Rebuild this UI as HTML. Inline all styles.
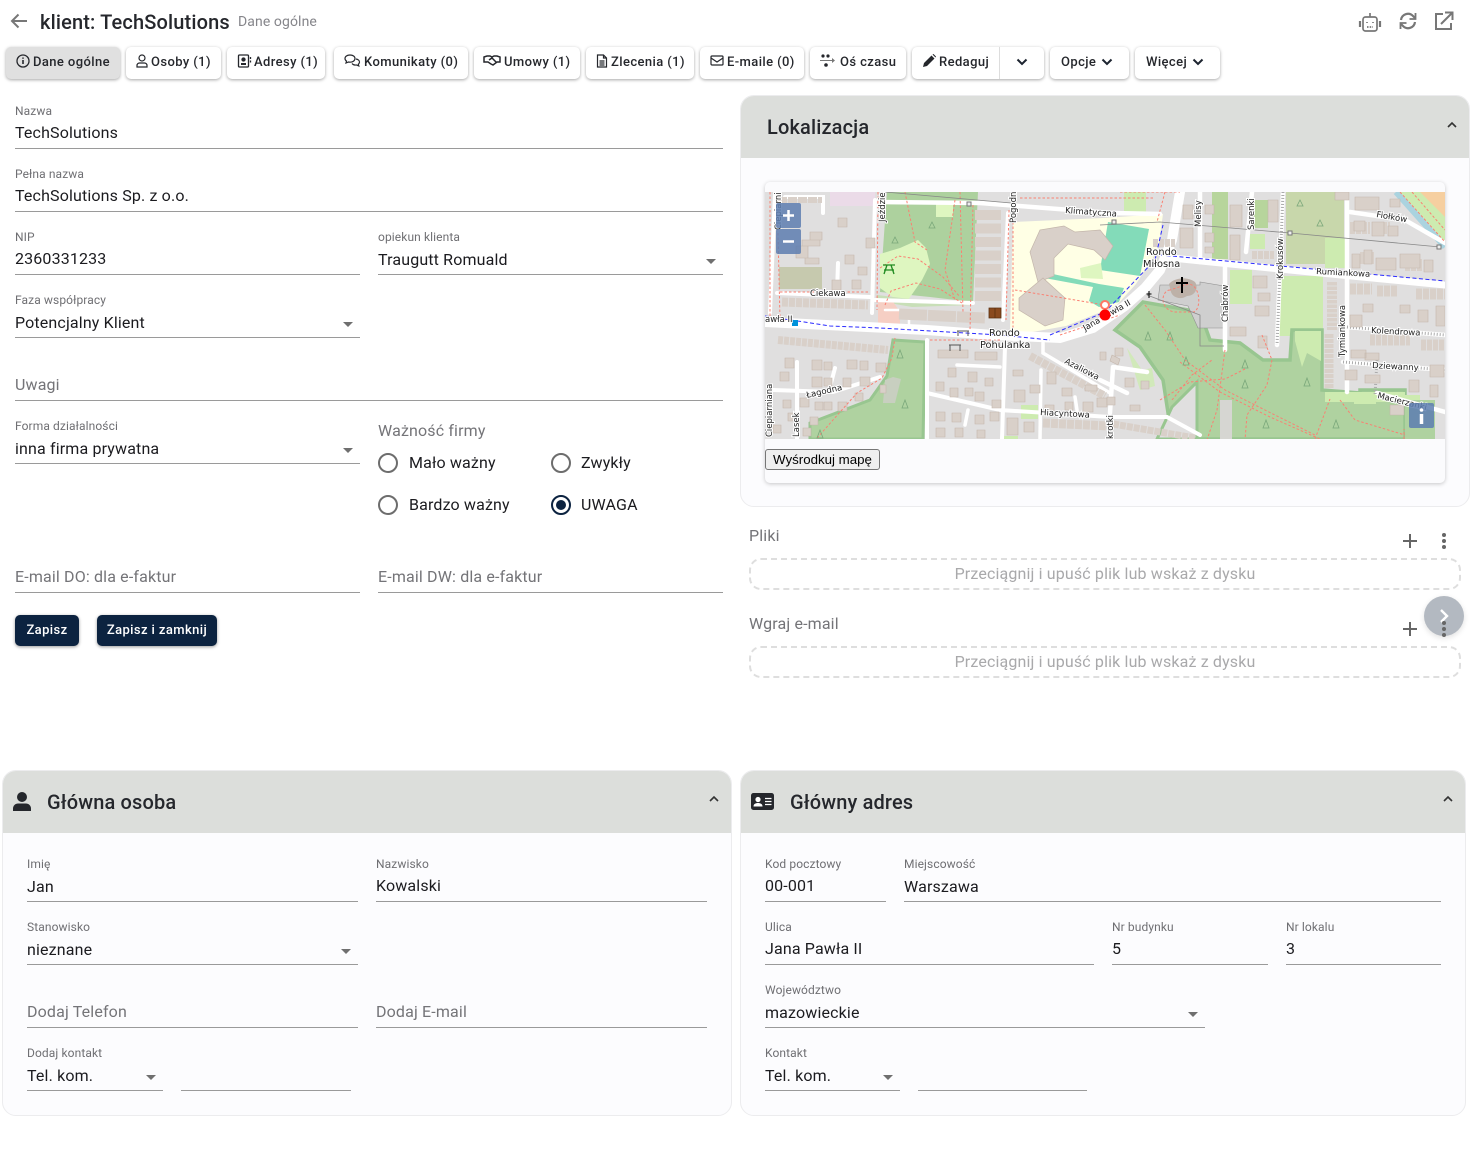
<!DOCTYPE html>
<html lang="pl"><head><meta charset="utf-8"><title>klient: TechSolutions</title>
<style>
html,body{margin:0;padding:0;background:#fff}
body{width:1473px;height:1173px;position:relative;overflow:hidden;font-family:"Roboto","Liberation Sans",Arial,sans-serif;color:#1b1b1f}
.t,.l,.v,.p{position:absolute;white-space:nowrap;line-height:20px}
.l{font-size:12px;color:#6f6f73;letter-spacing:.1px}
.v{font-size:16px;color:#1b1b1f;letter-spacing:.15px;margin-top:1px}
.p{font-size:16px;color:#747478;letter-spacing:.15px;margin-top:1px}
.u{position:absolute;height:1px;background:#9a9a9a}
.a{position:absolute;width:0;height:0;border-left:5px solid transparent;border-right:5px solid transparent;border-top:5px solid #6f6f6f}
.tab{position:absolute;top:47px;height:32px;background:#fff;border-radius:5px;box-shadow:0 1px 3px rgba(0,0,0,.35);font-size:13px;font-weight:500;line-height:30px;color:#25272c;white-space:nowrap;letter-spacing:.4px}
.tab svg{position:absolute;top:6px}
.tab span{position:absolute;top:1px}
.panel{position:absolute;border:1px solid #ececee;border-radius:14px;background:#fcfcfe;overflow:hidden}
.hd{position:absolute;left:0;right:0;top:0;height:62px;background:#dcdedb}
.ttl{position:absolute;font-size:20px;font-weight:500;line-height:24px;color:#25272c;white-space:nowrap;letter-spacing:.15px}
.r{position:absolute;width:16px;height:16px;border:2px solid #6d6d6d;border-radius:50%}
.btn{position:absolute;top:615px;height:31px;background:#0c2340;border-radius:5px;color:#fff;font-size:13px;font-weight:500;line-height:32px;text-align:center;box-shadow:0 1px 3px rgba(0,0,0,.4);letter-spacing:.4px}
.dz{position:absolute;left:749px;width:708px;height:28px;border:2px dashed #dedede;border-radius:12px;text-align:center;font-size:16px;line-height:27px;color:#a9a9ab;letter-spacing:.15px}
.ic{position:absolute}
</style></head><body>

<svg class="ic" style="left:9px;top:11px" width="20" height="20" viewBox="0 0 20 20"><path d="M18 10H3M9.500 3.500L3 10l6.500 6.500" fill="none" stroke="#777" stroke-width="2"/></svg>
<div class="ttl" style="left:40px;top:10px">klient: TechSolutions</div>
<div class="t" style="left:238px;top:12px;font-size:14px;color:#85858a;letter-spacing:.1px">Dane ogólne</div>

<svg class="ic" style="left:1358px;top:11px" width="24" height="22" viewBox="0 0 24 22" fill="none" stroke="#777" stroke-width="1.700"><rect x="5" y="6" width="14" height="14" rx="2.500"/><path d="M12 6V2"/><path d="M2 10v6M22 10v6" stroke-width="2.200"/><path d="M9 11v1M15 11v1M9 16h6" stroke-dasharray="1.500 1.200"/></svg>
<svg class="ic" style="left:1398px;top:11px" width="20" height="20" viewBox="0 0 20 20" fill="none" stroke="#777" stroke-width="2.200"><path d="M3 9a7 7 0 0 1 12-4l2 2M17 11a7 7 0 0 1-12 4l-2-2"/><path d="M17.500 2v6h-6M2.500 18v-6h6" fill="none" stroke-width="1.800"/></svg>
<svg class="ic" style="left:1434px;top:11px" width="20" height="20" viewBox="0 0 20 20" fill="none" stroke="#777" stroke-width="2"><path d="M9 3H2v15h15v-6M7 13L18 2M11 1.500h7.500V9"/></svg>

<div class="tab" style="left:6px;width:114px;background:#e0e0e0"><svg style="left:9px" width="16" height="16" viewBox="0 0 16 16" fill="none" stroke="#25272c" stroke-width="1.300"><circle cx="8" cy="8" r="6"/><path d="M8 7v4M8 4.500v1.200" stroke-width="1.600"/></svg><span style="left:27px">Dane ogólne</span></div>
<div class="tab" style="left:126px;width:95px"><svg style="left:8px" width="16" height="16" viewBox="0 0 16 16" fill="none" stroke="#25272c" stroke-width="1.200"><circle cx="8" cy="5" r="3"/><path d="M3 14v-1.500a2.500 2.500 0 0 1 2.500-2.500h5a2.500 2.500 0 0 1 2.500 2.500V14z"/></svg><span style="left:25px">Osoby (1)</span></div>
<div class="tab" style="left:227px;width:98px"><svg style="left:9px" width="16" height="16" viewBox="0 0 16 16" fill="none" stroke="#25272c" stroke-width="1.300"><rect x="2.500" y="2" width="10" height="12" rx="1"/><circle cx="7.500" cy="6.500" r="1.500" fill="#25272c"/><path d="M5 11h5" stroke-width="2"/><path d="M14.500 4v2M14.500 7.500v2"/></svg><span style="left:27px">Adresy (1)</span></div>
<div class="tab" style="left:334px;width:134px"><svg style="left:9px" width="18" height="16" viewBox="0 0 18 16" fill="none" stroke="#25272c" stroke-width="1.200"><path d="M7 2C4 2 2 3.500 2 5.500c0 1 .5 2 1.500 2.600L3 10l2.500-1c.5.100 1 .2 1.500.2 3 0 5-1.700 5-3.700S10 2 7 2z"/><path d="M13 6c2 .3 3.500 1.500 3.500 3 0 1-.5 1.700-1.200 2.200l.5 1.800-2.300-1c-2 .3-3.500-.2-4.500-1.500"/></svg><span style="left:30px">Komunikaty (0)</span></div>
<div class="tab" style="left:474px;width:106px"><svg style="left:9px" width="18" height="16" viewBox="0 0 18 16" fill="none" stroke="#25272c" stroke-width="1.500"><path d="M1 4l3-1 3 0 2 1 2-1h3l3 1v5l-3 0-4 3-2-1-3-2H1z"/><path d="M6 7l3-2 4 4"/></svg><span style="left:30px">Umowy (1)</span></div>
<div class="tab" style="left:586px;width:108px"><svg style="left:8px" width="16" height="16" viewBox="0 0 16 16" fill="none" stroke="#25272c" stroke-width="1.200"><path d="M3.500 2h6l3 3v9h-9zM9.500 2v3h3M5.500 8h5M5.500 10h5M5.500 12h5"/></svg><span style="left:25px">Zlecenia (1)</span></div>
<div class="tab" style="left:700px;width:104px"><svg style="left:9px" width="16" height="16" viewBox="0 0 16 16" fill="none" stroke="#25272c" stroke-width="1.200"><rect x="2" y="3" width="12" height="9" rx="1"/><path d="M2 5l6 4 6-4"/></svg><span style="left:27px">E-maile (0)</span></div>
<div class="tab" style="left:810px;width:96px"><svg style="left:9px" width="18" height="16" viewBox="0 0 18 16" fill="#25272c"><circle cx="4" cy="3" r="1.600"/><circle cx="9" cy="3" r="1.600"/><circle cx="7" cy="12" r="1.800"/><path d="M1 7h12V5l3 2.500-3 2.500V8H1z" fill="#777"/></svg><span style="left:30px">Oś czasu</span></div>
<div class="tab" style="left:912px;width:132px"><svg style="left:9px" width="16" height="16" viewBox="0 0 16 16" fill="#25272c"><path d="M2 14l1-4 7.500-7.500 3 3L6 13zM11.500 1.500l1-.5 2.500 2.500-.5 1z"/></svg><span style="left:27px">Redaguj</span><div style="position:absolute;left:87px;top:0;width:1px;height:32px;background:#ddd"></div><svg style="left:104px;top:9px" width="12" height="12" viewBox="0 0 12 12" fill="none" stroke="#1d2430" stroke-width="2"><path d="M1.500 3.500L6 8l4.500-4.500"/></svg></div>
<div class="tab" style="left:1050px;width:79px"><span style="left:11px">Opcje</span><svg style="left:51px;top:9px" width="12" height="12" viewBox="0 0 12 12" fill="none" stroke="#1d2430" stroke-width="2"><path d="M1.500 3.500L6 8l4.500-4.500"/></svg></div>
<div class="tab" style="left:1135px;width:85px"><span style="left:11px">Więcej</span><svg style="left:57px;top:9px" width="12" height="12" viewBox="0 0 12 12" fill="none" stroke="#1d2430" stroke-width="2"><path d="M1.500 3.500L6 8l4.500-4.500"/></svg></div>

<!-- left form -->
<div class="l" style="left:15px;top:101px">Nazwa</div><div class="v" style="left:15px;top:122px">TechSolutions</div><div class="u" style="left:15px;top:148px;width:708px"></div>
<div class="l" style="left:15px;top:164px">Pełna nazwa</div><div class="v" style="left:15px;top:185px">TechSolutions Sp. z o.o.</div><div class="u" style="left:15px;top:211px;width:708px"></div>
<div class="l" style="left:15px;top:227px">NIP</div><div class="v" style="left:15px;top:248px">2360331233</div><div class="u" style="left:15px;top:274px;width:345px"></div>
<div class="l" style="left:378px;top:227px">opiekun klienta</div><div class="v" style="left:378px;top:249px">Traugutt Romuald</div><div class="u" style="left:378px;top:274px;width:345px"></div><div class="a" style="left:706px;top:259px"></div>
<div class="l" style="left:15px;top:290px">Faza współpracy</div><div class="v" style="left:15px;top:312px">Potencjalny Klient</div><div class="u" style="left:15px;top:337px;width:345px"></div><div class="a" style="left:343px;top:322px"></div>
<div class="p" style="left:15px;top:374px">Uwagi</div><div class="u" style="left:15px;top:400px;width:708px"></div>
<div class="l" style="left:15px;top:416px">Forma działalności</div><div class="v" style="left:15px;top:438px">inna firma prywatna</div><div class="u" style="left:15px;top:463px;width:345px"></div><div class="a" style="left:343px;top:448px"></div>
<div class="p" style="left:378px;top:420px">Ważność firmy</div>
<div class="r" style="left:378px;top:453px"></div><div class="v" style="left:409px;top:452px">Mało ważny</div>
<div class="r" style="left:551px;top:453px"></div><div class="v" style="left:581px;top:452px">Zwykły</div>
<div class="r" style="left:378px;top:495px"></div><div class="v" style="left:409px;top:494px">Bardzo ważny</div>
<div class="r" style="left:551px;top:495px;border-color:#0c2340"></div><div style="position:absolute;left:556px;top:500px;width:10px;height:10px;border-radius:50%;background:#0c2340"></div><div class="v" style="left:581px;top:494px">UWAGA</div>
<div class="p" style="left:15px;top:566px">E-mail DO: dla e-faktur</div><div class="u" style="left:15px;top:592px;width:345px"></div>
<div class="p" style="left:378px;top:566px">E-mail DW: dla e-faktur</div><div class="u" style="left:378px;top:592px;width:345px"></div>
<div class="btn" style="left:15px;width:64px">Zapisz</div>
<div class="btn" style="left:97px;width:120px">Zapisz i zamknij</div>

<!-- Lokalizacja -->
<div class="panel" style="left:740px;top:95px;width:728px;height:410px"><div class="hd"></div></div>
<div class="ttl" style="left:767px;top:115px">Lokalizacja</div>
<svg class="ic" style="left:1446px;top:119px" width="12" height="12" viewBox="0 0 12 12" fill="none" stroke="#333" stroke-width="1.600"><path d="M2 8l4-4 4 4"/></svg>
<div style="position:absolute;left:765px;top:182px;width:680px;height:301px;background:#fbfbfd;border-radius:5px;box-shadow:0 1px 4px rgba(0,0,0,.22)"></div>

<svg class="ic" style="left:765px;top:192px;font-family:'DejaVu Sans',sans-serif" width="680" height="247" viewBox="765 192 680 247">
<rect x="765" y="192" width="680" height="247" fill="#e0dfdf"/>
<!-- parks top-left -->
<path d="M887 192H978L973 302 930 297 880 292Z" fill="#add19e"/>
<path d="M880 254l20-6 18-8 8 8 4 16-8 16-14 20-14-2-14-10z" fill="#def6c0"/>
<path d="M877 295l50 6 45 0v4l-60 2-35-6z" fill="#c8dfb8"/>
<path d="M878 300h14l8 12v14h-22z" fill="#f6cfc4"/>
<path d="M830 192h45v14h-45z" fill="#ebdbe8"/>
<rect x="779" y="267" width="43" height="22" fill="#c6c9ae"/>
<rect x="936" y="204" width="17" height="13" fill="#def6c0"/>
<!-- school -->
<path d="M1013 222l90-4 60-4-5 36-22 34-20 22-20 8-30 12-45 8-11-4z" fill="#ffffe5"/>
<path d="M1108 222l41 7-9 47-40-6z" fill="#83dbb9"/>
<path d="M1039 271l60 13 25 4-5 14-20 5-10-6 4-14-54-10z" fill="#83dbb9"/>
<path d="M1080 268l21-5 2 16-22-1z" fill="#def6c0"/>
<path d="M1040 230l24-4 11 6 25-2 13 16-8 14-11-10-26-6-14 14 0 18-16 6-8-30z" fill="#d9d0c9" stroke="#c4b6ab" stroke-width=".7"/>
<path d="M1019 298l24-20 22 20-2 22-18 6-26-16z" fill="#d9d0c9" stroke="#c4b6ab" stroke-width=".7"/>
<!-- right fields -->
<rect x="1212" y="192" width="16" height="67" fill="#b7d59c"/>
<rect x="1254" y="200" width="14" height="28" fill="#b7d59c"/>
<rect x="1250" y="234" width="15" height="15" fill="#cdebb0"/>
<rect x="1286" y="192" width="58" height="72" fill="#c8d7ab"/>
<rect x="1325" y="238" width="20" height="30" fill="#cdebb0"/>
<rect x="1230" y="270" width="22" height="34" fill="#cdebb0"/>
<rect x="1279" y="276" width="44" height="60" fill="#cdebb0"/>
<rect x="1124" y="192" width="22" height="20" fill="#cdebb0"/>
<path d="M1400 192h45v50z" fill="#cdebb0"/>
<path d="M1420 192h25v25z" fill="#f6cfa0"/>
<path d="M1396 192l49 55" stroke="#aad3df" stroke-width="6" fill="none"/>
<!-- forests -->
<path d="M1115 330l28-28 57 10 10 28 30 3 23 17 27 0 2-30h30v60l38 3v-3h45v49H1172l-9-59-23-33z" fill="#afd2a0" stroke="#98c690" stroke-width="3.500"/>
<path d="M1172 407l25-25v57h-40z" fill="#e0dfdf" stroke="#98c690" stroke-width="3"/>
<rect x="1220" y="400" width="12" height="39" fill="#d6d6d2"/>
<path d="M1295 331h26v30l-14-8-5 14-7-26z" fill="#cdebb0"/>
<path d="M1325 392h80v10h-80zM1405 395h40v20h-40z" fill="#cdebb0"/>
<path d="M1354 392l22 0v12l-22 0z" fill="#cdebb0"/>
<path d="M1420 392h25v47h-25z" fill="#e0dfdf"/>
<path d="M1405 400h30v39h-30z" fill="#afd2a0"/>
<path d="M1127 348l15 22 10-2 3 18-15 4z" fill="#cdebb0" opacity=".8"/>
<path d="M810 439v-16l60-23 17-24 6-36 32 2-2 97z" fill="#afd2a0" stroke="#98c690" stroke-width="3"/>
<path d="M885 380l8-3 8 2-6 24-12 0z" fill="#c8cfc0"/>
<rect x="1021" y="405" width="17" height="14" fill="#cdebb0"/>
<rect x="1003" y="436" width="15" height="4" fill="#cdebb0"/>
<path d="M1160 285l40 0 0-3 24 4 0 42-26 0-10-22-30-6z" fill="#cfcfcf" stroke="#909090" stroke-width=".6"/>
<path d="M1169 284c5-6 18-8 26-2 4 6 0 14-8 14-6 4-14 2-16-4z" fill="#bdb1a8"/>
<!-- roads -->
<g fill="none" stroke="#fff" stroke-linecap="round">
<path d="M765 322L927 330 993 335 1060 338 1093 328 1125 306 1145 288 1160 270 1172 240 1180 192" stroke-width="10"/>
<path d="M1172 258L1300 271 1445 285" stroke-width="7"/>
<path d="M785 197H823V213M875 200L872 313M777 293L870 297M775 193L770 313M838 263L837 293" stroke-width="4"/>
<path d="M880 202L980 203 1110 213 1160 214" stroke-width="4.500"/>
<path d="M1008 213L1003 320M1005 347L1002 439M927 340V439M927 393L1000 410 1110 417 1167 417 1200 435M875 300L973 303" stroke-width="4"/>
<path d="M957 365L1000 367M1043 343L1043 353 1110 393M1041 370L1040 439M1075 397L1077 410M968 410L965 425" stroke-width="3.500"/>
<path d="M773 390L833 392 880 377M797 362L797 439M835 368L830 387" stroke-width="4"/>
<path d="M1113 367L1147 372M1113 367L1110 413M1100 380L1127 393" stroke-width="4.500"/>
<path d="M1347 192V392M1225 265V350M1350 212L1405 220 1445 243M1377 393L1445 412M1200 192V262M1252 192L1246 252" stroke-width="4.500"/>
<path d="M1283 192L1277 345M1347 327L1445 335M1343 362L1445 370" stroke-width="4.500"/>
<path d="M885 310h15q8 2 9 10v6" stroke-width="2.500"/>
</g>
<path d="M1283 192L1277 345M1347 327L1445 335M1343 362L1445 370M1377 360l-2 35" fill="none" stroke="#aaa" stroke-width="3" stroke-dasharray="1 2"/>
<!-- building rows -->
<g fill="none" stroke="#d9d0c9">
<path d="M778 340L888 350" stroke-width="8" stroke-dasharray="5 1"/>
<path d="M782 302L868 305" stroke-width="9" stroke-dasharray="6 1"/>
<path d="M778 200h44" stroke-width="6" stroke-dasharray="9 1"/>
<path d="M899 314L985 318" stroke-width="11" stroke-dasharray="28 1"/>
<path d="M988 210V304" stroke-width="26" stroke-dasharray="10 3.500"/>
<path d="M1030 356L1105 396" stroke-width="8" stroke-dasharray="6 1"/>
<path d="M1043 423L1110 426" stroke-width="9" stroke-dasharray="7 1"/>
<path d="M1113 424L1195 438" stroke-width="7" stroke-dasharray="6 1"/>
<path d="M1332 282V330" stroke-width="10" stroke-dasharray="3.500 1"/>
<path d="M1329 334V388" stroke-width="9" stroke-dasharray="4 1"/>
<path d="M1350 289H1372M1377 291H1397M1416 294H1445" stroke-width="11" stroke-dasharray="6 1"/>
<path d="M1370 340H1410M1421 345H1445" stroke-width="11" stroke-dasharray="5 1"/>
<path d="M1153 243H1175M1252 255H1274" stroke-width="8" stroke-dasharray="5 1"/>
<path d="M1350 228h20M1376 228h14M1405 265h18M1360 258h14" stroke-width="12" stroke-dasharray="5 1"/>
</g>
<!-- buildings -->
<g fill="#d9d0c9" stroke="#c4b6ab" stroke-width=".6">
<path d="M838 218h9v9h-9zM866 238h9v10h-9zM845 255h9v9h-9zM852 280h9v9h-9zM832 280h9v10h-9zM858 267h9v8h-9zM805 258h14v6h-14zM802 240h18v6h-18zM810 232h12v8h-12zM796 246h12v12h-12z"/>
<path d="M785 358h9v10h-9zM812 360h10v10h-10zM824 362h8v8h-8zM847 360h10v9h-10zM860 361h8v9h-8zM876 363h10v9h-10zM780 372h9v9h-9zM812 377h10v10h-10zM824 378h8v8h-8zM843 378h8v9h-8zM860 377h10v9h-10zM783 400h8v8h-8zM800 398h9v9h-9zM815 402h8v8h-8zM824 402h8v8h-8zM838 402h9v9h-9zM855 393h8v8h-8zM880 385h6v8h-6zM788 413h8v8h-8zM810 417h8v8h-8zM773 425h8v8h-8zM803 428h8v8h-8z"/>
<path d="M938 350h30v8h-30zM975 352h22v8h-22zM948 368h8v9h-8zM968 372h9v10h-9zM985 378h8v8h-8zM936 382h8v9h-8zM950 388h8v9h-8zM965 388h8v8h-8zM975 392h9v9h-9zM992 400h9v8h-9zM936 412h9v9h-9zM952 413h9v9h-9zM936 428h9v9h-9zM955 428h8v9h-8zM975 415h9v9h-9zM990 412h9v9h-9zM977 430h8v8h-8zM1007 418h11v17h-11zM1024 422h10v10h-10z"/>
<path d="M1013 370h10v6h-10zM1014 390h11v12h-11zM1030 385h10v8h-10zM1047 372h9v12h-9zM1062 388h10v8h-10zM1085 385h12v6h-12zM1097 398h10v9h-10zM1045 405h9v8h-9zM1065 402h8v8h-8zM1083 402h10v10h-10z"/>
<path d="M1112 355l8 4-2 6-8-4zM1115 348h8v8h-8zM1125 378h9v9h-9zM1141 381h8v8h-8zM1100 352h6v8h-6zM1130 405h10v6h-10zM1107 397h8v8h-8z"/>
<path d="M1183 205h10v14h-10zM1205 205h9v9h-9zM1180 228h13v20h-13zM1205 233h9v9h-9zM1205 247h9v6h-9zM1230 205h12v22h-12zM1230 235h10v25h-10zM1268 200h10v22h-10z"/>
<path d="M1253 276h14v12h-14zM1258 293h12v8h-12zM1255 306h14v10h-14zM1230 327h16v9h-16zM1258 336h9v12h-9z"/>
<path d="M1335 192h14v8h-14zM1355 197h24v13h-24zM1390 199h10v8h-10zM1354 221h11v10h-11zM1372 222h12v14h-12zM1388 226h10v10h-10zM1352 254h8v14h-8zM1364 250h8v14h-8zM1376 258h20v12h-20zM1400 254h20v14h-20zM1424 260h9v12h-9z"/>
<path d="M1363 304h10v8h-10zM1400 305h10v8h-10zM1350 315h12v12h-12zM1418 310h10v12h-10zM1436 306h9v20h-9z"/>
<path d="M1351 350h15v8h-15zM1365 353h14v7h-14zM1345 370h12v10h-12zM1365 375h15v8h-15zM1409 380h10v12h-10zM1430 385h8v12h-8zM1430 365h14v12h-14zM1390 405h14v10h-14z"/>
</g>
<!-- paths -->
<g fill="none" stroke="#fa8072" stroke-width="1" stroke-dasharray="2.500 2">
<path d="M878 192L877 310M885 305l6-14 25-8 24 6 22 14M880 268l18-12 20 3 25 18 17 20M905 192l10 50 12 8M955 200l-10 70 10 30M960 192l3 120M973 205l-3 125M1009 210L1006 320M1013 222l0 115M1015 290l90 15M1060 335l60-20M1020 198h135M1120 192h60M1165 192l-8 30"/>
<path d="M817 438l40-45 25-15 10-20 3-20M790 320h-10l-3-130M770 192v130M780 292h90M930 340h70"/>
<path d="M1145 305l20 25 20 30 40 30 60 30 30 15M1225 350l-8 60-10 30M1180 362l40 30 50 25 50 22M1262 335l10 25-5 25-20 30-2 25M1160 400l30-18 35-3 20-10M1172 400l20-25 20-15M1340 400l15 20 50 15M1315 439l15-40M1404 439v-10M1400 192l45 50M1412 192l33 38"/>
<path d="M1170 290c-8 0-12 18 4 22h20c8-4 6-28-6-28z"/>
</g>
<path d="M765 316L830 326 880 328 1000 335 1050 340M1050 335L1105 312 1155 260M1160 255L1445 281M1155 260l8-35" fill="none" stroke="#2b2bff" stroke-width="1" stroke-dasharray="4 2.500"/>
<path d="M885 192L1011 203M1100 225L1160 222 1290 233 1440 247M1147 295l53 20v31h24" fill="none" stroke="#888" stroke-width=".8"/>
<g fill="#eee" stroke="#777"><rect x="1112" y="220" width="4" height="4" stroke-width="1"/><rect x="967" y="202" width="4" height="4" stroke-width="1"/><rect x="1288" y="231" width="4" height="4" stroke-width="1"/><rect x="1437" y="245" width="4" height="4" stroke-width="1"/></g>
<!-- symbols -->
<path d="M883 265h12M884 270h10M887 265l-3 9M891 265l3 9" stroke="#1f8a1f" stroke-width="1.300" fill="none"/>
<path d="M989 308h6v10h-6zM995 308h6v10h-6z" fill="#8a4a1f" stroke="#5a3010" stroke-width=".8"/>
<path d="M957 331h12M958 331v5M968 331v5M949 345h12M950 345v6M960 345v6" stroke="#555" fill="none"/>
<rect x="792" y="320" width="6" height="6" fill="#0092da"/>
<path d="M1182 277v16M1176 283h12" stroke="#000" stroke-width="2"/>
<path d="M1149 291v7M1146.500 294h5" stroke="#000" stroke-width="1"/>
<g fill="none" stroke="#7aa77a" stroke-width=".8"><path d="M932 222l3 6h-6zM895 237l3 6h-6zM1148 332l3 8h-6zM1170 332l3 8h-6zM1186 357l3 8h-6zM1245 360l3 8h-6zM1307 378l3 8h-6zM1245 380l3 8h-6zM1266 420l3 8h-6zM1336 420l3 8h-6zM820 430l3 8h-6zM900 350l3 8h-6zM905 400l3 8h-6zM1300 200l3 6h-6zM1320 220l3 6h-6z"/></g>
<!-- labels -->
<g font-size="8.500" fill="#222" stroke="#fff" stroke-width="2" paint-order="stroke">
<text x="810" y="296">Ciekawa</text>
<text x="989" y="336" font-size="9.800">Rondo</text><text x="980" y="348" font-size="9.800">Pohulanka</text>
<text x="1146" y="255" font-size="9.800">Rondo</text><text x="1143" y="267" font-size="9.800">Miłosna</text>
<text x="1065" y="213" transform="rotate(4 1065 213)">Klimatyczna</text>
<text x="1376" y="217" transform="rotate(10 1376 217)">Fiołków</text>
<text x="1316" y="274" transform="rotate(3 1316 274)">Rumiankowa</text>
<text x="1371" y="333" transform="rotate(3 1371 333)">Kolendrowa</text>
<text x="1372" y="368" transform="rotate(3 1372 368)">Dziewanny</text>
<text x="1377" y="398" transform="rotate(14 1377 398)">Macierzanki</text>
<text x="1040" y="415" transform="rotate(3 1040 415)">Hiacyntowa</text>
<text x="1064" y="363" transform="rotate(27 1064 363)">Azaliowa</text>
<text x="807" y="398" transform="rotate(-13 807 398)">Łagodna</text>
<text x="1085" y="331" transform="rotate(-30 1085 331)">Jana Pawła II</text>
<text x="765" y="322">awła II</text>
<text x="885" y="222" transform="rotate(-90 885 222)">Jeździec</text>
<text x="1016" y="223" transform="rotate(-90 1016 223)">Pogodna</text>
<text x="1201" y="227" transform="rotate(-90 1201 227)">Melisy</text>
<text x="1254" y="230" transform="rotate(-90 1254 230)">Sarenki</text>
<text x="1283" y="279" transform="rotate(-90 1283 279)">Krokusów</text>
<text x="1228" y="322" transform="rotate(-90 1228 322)">Chabrów</text>
<text x="1345" y="357" transform="rotate(-90 1345 357)">Tymiankowa</text>
<text x="772" y="437" transform="rotate(-90 772 437)">Ciepiarniana</text>
<text x="799" y="437" transform="rotate(-90 799 437)">Lasek</text>
<text x="1113" y="439" transform="rotate(-90 1113 439)">krotki</text>
<text x="781" y="230" transform="rotate(-90 781 230)">Ciepiarnia</text>
</g>
<!-- marker -->
<circle cx="1105" cy="305" r="4" fill="#fff" stroke="#f76" stroke-width="2"/><circle cx="1105" cy="315" r="5.500" fill="#f00"/>
<!-- controls -->
<rect x="776" y="203" width="25" height="25" rx="2" fill="#5d7eb0" opacity=".85"/><rect x="776" y="229" width="25" height="25" rx="2" fill="#5d7eb0" opacity=".85"/>
<path d="M783 215.500h11M788.500 210v11M783 241.500h11" stroke="#fff" stroke-width="2.500"/>
<rect x="1409" y="403" width="25" height="25" rx="2" fill="#5d7eb0" opacity=".85"/>
<path d="M1421.500 414v10" stroke="#fff" stroke-width="3.500"/><circle cx="1421.500" cy="410" r="1.800" fill="#fff"/>
</svg>
<div style="position:absolute;left:765px;top:449px;width:113px;height:19px;border:1px solid #767676;border-radius:3px;background:#efefef;font-size:13.300px;line-height:20px;text-align:center;color:#000;font-family:'Liberation Sans',Arial,sans-serif">Wyśrodkuj mapę</div>

<div class="p" style="left:749px;top:525px">Pliki</div>
<svg class="ic" style="left:1400px;top:531px" width="20" height="20"><path d="M10 3v14M3 10h14" stroke="#666" stroke-width="2"/></svg>
<svg class="ic" style="left:1440px;top:532px" width="8" height="18" fill="#666"><circle cx="4" cy="3" r="2"/><circle cx="4" cy="9" r="2"/><circle cx="4" cy="15" r="2"/></svg>
<div class="dz" style="top:558px">Przeciągnij i upuść plik lub wskaż z dysku</div>
<div class="p" style="left:749px;top:613px">Wgraj e-mail</div>
<svg class="ic" style="left:1400px;top:619px" width="20" height="20"><path d="M10 3v14M3 10h14" stroke="#666" stroke-width="2"/></svg>
<div class="dz" style="top:646px">Przeciągnij i upuść plik lub wskaż z dysku</div>
<div style="position:absolute;left:1424px;top:596px;width:40px;height:40px;border-radius:50%;background:#b3b9c1;box-shadow:0 2px 6px rgba(0,0,0,.12)"></div>
<svg class="ic" style="left:1438px;top:608px" width="12" height="16" fill="none" stroke="#fff" stroke-width="2.400"><path d="M3 2l6 6-6 6"/></svg>
<svg class="ic" style="left:1440px;top:620px" width="8" height="18" fill="#666"><circle cx="4" cy="3" r="2"/><circle cx="4" cy="9" r="2"/><circle cx="4" cy="15" r="2"/></svg>

<!-- Główna osoba -->
<div class="panel" style="left:2px;top:770px;width:728px;height:344px"><div class="hd"></div></div>
<svg class="ic" style="left:12px;top:791px" width="20" height="21" viewBox="0 0 20 21" fill="#25272c"><circle cx="10" cy="6" r="5"/><path d="M1 20v-2.500C1 14.500 3.500 12.500 6 12.500h8c2.500 0 5 2 5 5V20z"/></svg>
<div class="ttl" style="left:47px;top:790px">Główna osoba</div>
<svg class="ic" style="left:708px;top:793px" width="12" height="12" viewBox="0 0 12 12" fill="none" stroke="#333" stroke-width="1.600"><path d="M2 8l4-4 4 4"/></svg>
<div class="l" style="left:27px;top:854px">Imię</div><div class="v" style="left:27px;top:876px">Jan</div><div class="u" style="left:27px;top:901px;width:331px"></div>
<div class="l" style="left:376px;top:854px">Nazwisko</div><div class="v" style="left:376px;top:875px">Kowalski</div><div class="u" style="left:376px;top:901px;width:331px"></div>
<div class="l" style="left:27px;top:917px">Stanowisko</div><div class="v" style="left:27px;top:939px">nieznane</div><div class="u" style="left:27px;top:964px;width:331px"></div><div class="a" style="left:341px;top:949px"></div>
<div class="p" style="left:27px;top:1001px">Dodaj Telefon</div><div class="u" style="left:27px;top:1027px;width:331px"></div>
<div class="p" style="left:376px;top:1001px">Dodaj E-mail</div><div class="u" style="left:376px;top:1027px;width:331px"></div>
<div class="l" style="left:27px;top:1043px">Dodaj kontakt</div><div class="v" style="left:27px;top:1065px">Tel. kom.</div><div class="u" style="left:27px;top:1090px;width:136px"></div><div class="a" style="left:146px;top:1075px"></div><div class="u" style="left:181px;top:1090px;width:170px"></div>

<!-- Główny adres -->
<div class="panel" style="left:740px;top:770px;width:724px;height:344px"><div class="hd"></div></div>
<svg class="ic" style="left:751px;top:793px" width="23" height="18" viewBox="0 0 23 18"><rect width="23" height="17" rx="2.500" fill="#25272c"/><circle cx="7" cy="6.500" r="2.600" fill="#fff"/><path d="M2.500 13.500c0-2.500 2-3.500 4.500-3.500s4.500 1 4.500 3.500z" fill="#fff"/><path d="M14 5.500h6.500M14 8.500h6.500M14 11.500h6.500" stroke="#fff" stroke-width="1.300"/></svg>
<div class="ttl" style="left:790px;top:790px">Główny adres</div>
<svg class="ic" style="left:1442px;top:793px" width="12" height="12" viewBox="0 0 12 12" fill="none" stroke="#333" stroke-width="1.600"><path d="M2 8l4-4 4 4"/></svg>
<div class="l" style="left:765px;top:854px">Kod pocztowy</div><div class="v" style="left:765px;top:875px">00-001</div><div class="u" style="left:765px;top:901px;width:121px"></div>
<div class="l" style="left:904px;top:854px">Miejscowość</div><div class="v" style="left:904px;top:876px">Warszawa</div><div class="u" style="left:904px;top:901px;width:537px"></div>
<div class="l" style="left:765px;top:917px">Ulica</div><div class="v" style="left:765px;top:938px">Jana Pawła II</div><div class="u" style="left:765px;top:964px;width:329px"></div>
<div class="l" style="left:1112px;top:917px">Nr budynku</div><div class="v" style="left:1112px;top:938px">5</div><div class="u" style="left:1112px;top:964px;width:156px"></div>
<div class="l" style="left:1286px;top:917px">Nr lokalu</div><div class="v" style="left:1286px;top:938px">3</div><div class="u" style="left:1286px;top:964px;width:155px"></div>
<div class="l" style="left:765px;top:980px">Województwo</div><div class="v" style="left:765px;top:1002px">mazowieckie</div><div class="u" style="left:765px;top:1027px;width:440px"></div><div class="a" style="left:1188px;top:1012px"></div>
<div class="l" style="left:765px;top:1043px">Kontakt</div><div class="v" style="left:765px;top:1065px">Tel. kom.</div><div class="u" style="left:765px;top:1090px;width:135px"></div><div class="a" style="left:883px;top:1075px"></div><div class="u" style="left:918px;top:1090px;width:169px"></div>
</body></html>
